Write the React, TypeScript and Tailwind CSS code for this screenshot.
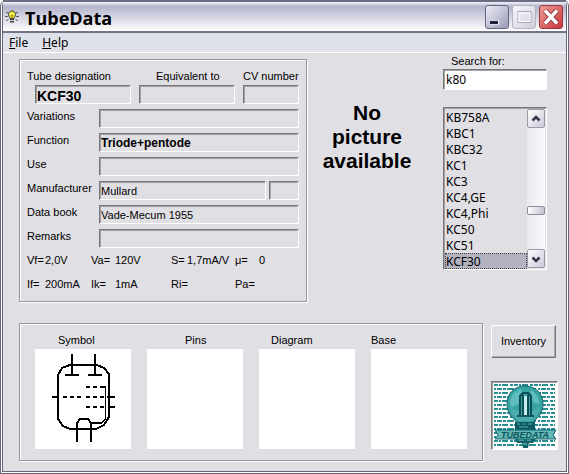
import { useState } from "react";

const TUBES = [
  "KB758A",
  "KBC1",
  "KBC32",
  "KC1",
  "KC3",
  "KC4,GE",
  "KC4,Phi",
  "KC50",
  "KC51",
  "KCF30",
];

const SUNKEN =
  "border border-t-[#77777b] border-l-[#77777b] border-r-white border-b-white shadow-[inset_1px_1px_0_#a2a2a5]";
const GROUP =
  "border border-[#96969d] shadow-[1px_1px_0_#fff,inset_1px_1px_0_#fff]";

type FieldProps = {
  label: string;
  value?: string;
  className?: string;
};

function Field({ label, value = "", className = "" }: FieldProps) {
  return (
    <input
      aria-label={label}
      readOnly
      defaultValue={value}
      className={`h-[19px] w-full min-w-0 bg-[#e0dfe4] pl-px outline-none ${SUNKEN} ${className}`}
    />
  );
}

function Row({
  label,
  children,
}: {
  label: string;
  children: React.ReactNode;
}) {
  return (
    <div className="flex h-[19px] items-start">
      <span className="w-[72px] shrink-0 leading-[15px]">{label}</span>
      <div className="flex min-w-0 flex-1 gap-[3px]">{children}</div>
    </div>
  );
}

export default function App() {
  return (
    <div className="flex min-h-screen w-full flex-col rounded-t-md border-x-3 border-b-3 border-double border-[#67677c] bg-white font-['Liberation_Sans',sans-serif] text-[11px] text-black">
      <TitleBar />
      <nav className="flex h-5 items-center gap-[14px] border-b border-white bg-[#dee0ea] pl-1.5 font-['Noto_Sans',sans-serif] text-[12px]">
        <button>
          <u>F</u>ile
        </button>
        <button>
          <u>H</u>elp
        </button>
      </nav>
      <main className="flex-1 bg-[#e0dfe4] pr-2 pb-2 pl-4">
        <div className="flex items-start">
          <TubeDetails />
          <p className="w-[136px] shrink-0 pt-12 pr-4 text-center text-[21px] leading-6 font-bold">
            No
            <br />
            picture
            <br />
            available
          </p>
          <SearchPanel />
        </div>
        <div className="mt-[21px] flex items-start gap-2">
          <Drawings />
          <div className="w-[67px] shrink-0 pt-0.5">
            <button className="h-[33px] w-[65px] border border-t-white border-r-[#77777b] border-b-[#77777b] border-l-white shadow-[inset_-1px_-1px_0_#a9a9ae]">
              Inventory
            </button>
            <Logo />
          </div>
        </div>
      </main>
    </div>
  );
}

function TitleBar() {
  return (
    <header className="flex h-[33px] items-center border-t-2 border-b-2 border-t-[#6c6c82] border-b-[#73738a] bg-linear-to-b from-[#f4f4fa] via-[#b4b4cc] via-15% to-white pr-[3px] pl-0.5">
      <svg viewBox="0 0 14 14" className="h-[14px] w-[14px]">
        <path
          d="M0.5 6.5h2M11.5 6.5h2M1.5 2l1.5 1.5M12.5 2L11 3.5M1.5 11L3 9.5M12.5 11L11 9.5"
          stroke="#222"
        />
        <path
          d="M7 1C4.6 1 3.5 2.7 3.5 4.5c0 1.700 1.500 2.500 1.500 4h4c0-1.500 1.500-2.300 1.500-4C10.500 2.700 9.400 1 7 1Z"
          fill="#f3ee35"
          stroke="#333"
        />
        <path d="M5 3.500l1-1v3z" fill="#fff" />
        <path d="M6 5l1 1.500L8 5M7 6.500V9" stroke="#807a10" fill="none" />
        <path d="M5 9h4v3.500H5z" fill="#444" />
        <path d="M5 10.500h4" stroke="#ccc" />
      </svg>
      <h1 className="ml-1.5 flex-1 pt-0.5 font-['Open_Sans',sans-serif] text-[18px] leading-6 font-bold">
        TubeData
      </h1>
      <div className="flex gap-[3px]">
        <button
          aria-label="Minimize"
          className="h-6 w-6 rounded-[3px] border border-[#65657f] bg-linear-to-br from-[#ededf5] to-[#9b9bb9]"
        >
          <svg viewBox="0 0 22 22">
            <path d="M4 16.500h9" stroke="#fff" strokeWidth="4" />
            <path d="M4 16.500h8" stroke="#20203c" strokeWidth="3" />
          </svg>
        </button>
        <button
          aria-label="Maximize"
          className="h-6 w-6 rounded-[3px] border border-[#b4b4c4] bg-linear-to-br from-[#f6f6fa] to-[#cfcfdd]"
        >
          <svg viewBox="0 0 22 22" fill="none">
            <path d="M5 5.500h13v11H5z" stroke="#a9a9b8" />
            <path d="M6 7h11v8.500H6z" stroke="#fff" />
          </svg>
        </button>
        <button
          aria-label="Close"
          className="h-6 w-6 rounded-[3px] border border-[#9c3340] bg-linear-to-br from-[#eb9a98] to-[#c7303a]"
        >
          <svg viewBox="0 0 22 22">
            <path
              d="M5 4.500l12 13M17 4.500L5 17.500"
              stroke="#7e2530"
              strokeWidth="5"
            />
            <path
              d="M5 4.500l12 13M17 4.500L5 17.500"
              stroke="#fff"
              strokeWidth="3.500"
            />
          </svg>
        </button>
      </div>
    </header>
  );
}

function TubeDetails() {
  return (
    <section
      className={`mt-1.5 min-w-0 flex-1 px-[7px] pt-2 pb-[5px] ${GROUP}`}
    >
      <div className="grid grid-cols-[112fr_104fr_56fr] leading-4 whitespace-nowrap">
        <span>Tube designation</span>
        <span className="pl-[17px]">Equivalent to</span>
        <span>CV number</span>
      </div>
      <div className="mt-px grid grid-cols-[96fr_96fr_56fr] gap-2 pl-2">
        <Field
          label="Tube designation"
          value="KCF30"
          className="pt-[3px] text-[14px] font-bold"
        />
        <Field label="Equivalent to" />
        <Field label="CV number" />
      </div>
      <div className="mt-[5px] flex flex-col gap-[5px]">
        <Row label="Variations">
          <Field label="Variations" />
        </Row>
        <Row label="Function">
          <Field
            label="Function"
            value="Triode+pentode"
            className="text-[12px] font-bold"
          />
        </Row>
        <Row label="Use">
          <Field label="Use" />
        </Row>
        <Row label="Manufacturer">
          <Field label="Manufacturer" value="Mullard" />
          <div className="w-[30px] shrink-0">
            <Field label="Manufacturer code" />
          </div>
        </Row>
        <Row label="Data book">
          <Field label="Data book" value="Vade-Mecum 1955" />
        </Row>
        <Row label="Remarks">
          <Field label="Remarks" />
        </Row>
      </div>
      <div className="grid grid-cols-[18px_46px_24px_56px_16px_48px_24px_1fr] leading-6 whitespace-nowrap">
        <span>Vf=</span>
        <span>2,0V</span>
        <span>Va=</span>
        <span>120V</span>
        <span>S=</span>
        <span>1,7mA/V</span>
        <span>μ=</span>
        <span>0</span>
        <span>If=</span>
        <span>200mA</span>
        <span>Ik=</span>
        <span>1mA</span>
        <span>Ri=</span>
        <span />
        <span>Pa=</span>
        <span />
      </div>
    </section>
  );
}

function SearchPanel() {
  const [query, setQuery] = useState("k80");
  const [tube, setTube] = useState("KCF30");

  return (
    <section className="mr-[11px] w-[104px] shrink-0">
      <label htmlFor="search" className="block pl-2 leading-4">
        Search for:
      </label>
      <input
        id="search"
        value={query}
        onChange={(e) => setQuery(e.target.value)}
        className={`block h-[21px] w-full bg-white pl-0.5 font-['Noto_Sans',sans-serif] text-[12px] outline-none ${SUNKEN}`}
      />
      <div className={`mt-[17px] flex h-[163px] p-px ${SUNKEN}`}>
        <select
          size={10}
          aria-label="Tubes"
          value={tube}
          onChange={(e) => setTube(e.target.value)}
          className="h-40 min-w-0 flex-1 overflow-hidden bg-[#e0dfe4] font-['Noto_Sans',sans-serif] text-[12px] outline-none"
        >
          {TUBES.map((name) => (
            <option
              key={name}
              className="h-4 min-h-4 p-0 pl-px leading-[15px] checked:bg-[#b3b3bf] checked:bg-linear-to-r checked:from-[#b3b3bf] checked:to-[#b3b3bf] checked:text-black checked:outline-1 checked:-outline-offset-1 checked:outline-dotted checked:outline-[#444]"
            >
              {name}
            </option>
          ))}
        </select>
        <div className="flex w-[18px] flex-col bg-linear-to-r from-[#e9e9f0] to-[#fafafd]">
          <ScrollButton label="Scroll up" path="M4.500 9.500L8 6l3.500 3.500" />
          <div className="flex-1" />
          <div className="h-[9px] rounded-[2px] border border-[#8b8b9c] bg-linear-to-r from-white to-[#c4c4d3]" />
          <div className="h-[34px]" />
          <ScrollButton label="Scroll down" path="M4.500 6.500L8 10l3.500-3.500" />
        </div>
      </div>
    </section>
  );
}

function ScrollButton({ label, path }: { label: string; path: string }) {
  return (
    <button
      aria-label={label}
      className="flex h-[19px] items-center justify-center rounded-[2px] border border-[#9a9aac] bg-linear-to-br from-white to-[#c9c9d8]"
    >
      <svg viewBox="0 0 16 16" className="h-4 w-4">
        <path d={path} fill="none" stroke="#35354c" strokeWidth="2.500" />
      </svg>
    </button>
  );
}

function Drawings() {
  return (
    <section
      className={`grid min-w-0 flex-1 grid-cols-4 gap-x-4 px-[15px] pt-2 pb-[11px] ${GROUP}`}
    >
      <span className="h-[17px] pl-[23px] leading-4">Symbol</span>
      <span className="pl-[38px] leading-4">Pins</span>
      <span className="pl-3 leading-4">Diagram</span>
      <span className="leading-4">Base</span>
      <div className="h-[100px] bg-white">
        <TubeSymbol />
      </div>
      <div className="h-[100px] bg-white" />
      <div className="h-[100px] bg-white" />
      <div className="h-[100px] bg-white" />
    </section>
  );
}

function TubeSymbol() {
  return (
    <svg
      viewBox="0 0 96 100"
      className="h-[100px] w-full"
      fill="none"
      stroke="#000"
      strokeWidth="2"
      shapeRendering="crispEdges"
    >
      <path d="M37 5v21M30 26h14M60 5v21M53 26h14" />
      <path d="M35 16h27l7 3l5 6v43l-5 8l-8 4H35l-7-3l-5-7V26l4-7z" />
      <path d="M17 48h7M28 48h4M35 48h4M42 48h4" />
      <path d="M51 38h4M58 38h4M65 38h6M51 48h4M58 48h4M65 48h4M72 48h8M51 58h4M58 58h4M65 58h4M74 58h6" />
      <path d="M70.500 38v32l-4 4" strokeWidth="1" />
      <path d="M67 74H56" />
      <path d="M42 93V74l3-4h8l3 4v19" />
    </svg>
  );
}

function Logo() {
  return (
    <div className={`mt-[23px] h-[69px] w-[67px] bg-white ${SUNKEN}`}>
      <svg viewBox="0 0 65 67" className="h-full w-full">
        <g stroke="#278d91" strokeWidth="2">
          <path d="M2 3h61M2 11h61M2 19h61M2 27h61M2 35h61M2 43h61M2 51h61M2 59h61" strokeDasharray="4 1 2 1 6 2 3 1" />
          <path d="M2 7h61M2 15h61M2 23h61M2 31h61M2 39h61M2 47h61M2 55h61M2 63h61" strokeDasharray="2 1 5 1 3 1 7 2" />
        </g>
        <path
          d="M33 4C22 4 15 12 15 22c0 8 4 13 9 17v4h18v-4c5-4 9-9 9-17C51 12 44 4 33 4Z"
          fill="#38a3a5"
          stroke="#176368"
        />
        <path
          d="M18 22c0-8 5-14 12-15l-2 14-8 4zM38 8c6 2 9 8 9 14l-6-2z"
          fill="#5fbdbd"
        />
        <path d="M18 25c8 6 22 6 30 0c-1 8-6 12-10 14H28c-5-3-9-8-10-14Z" fill="#4cabad" />
        <path
          d="M28 34V14l3-3h5l3 3v20M31 34V13M36 34V13"
          fill="none"
          stroke="#0d4d53"
          strokeWidth="2"
        />
        <path d="M32 14h3v19h-3z" fill="#c5ecea" />
        <path d="M25 34h17" stroke="#115b60" strokeWidth="2" />
        <path d="M23 40h20v8H23z" fill="#0d5960" />
        <path d="M25 42h3M30 42h3M36 42h4M27 45h9" stroke="#57adb0" />
        <path d="M23 57h21l-3 4h-4l-1 5h-5l-1-5h-5z" fill="#126269" />
        <path d="M26 58h6M35 58h4M31 62h4" stroke="#86cccc" />
        <path
          d="M3 48h61l-3 5l3 4H3l3-4z"
          fill="#63b7b8"
          stroke="#156b70"
        />
        <text
          x="33"
          y="56"
          textAnchor="middle"
          className="fill-[#0c555b] font-['Liberation_Sans',sans-serif] text-[9px] font-bold italic"
        >
          TUBEDATA
        </text>
      </svg>
    </div>
  );
}
